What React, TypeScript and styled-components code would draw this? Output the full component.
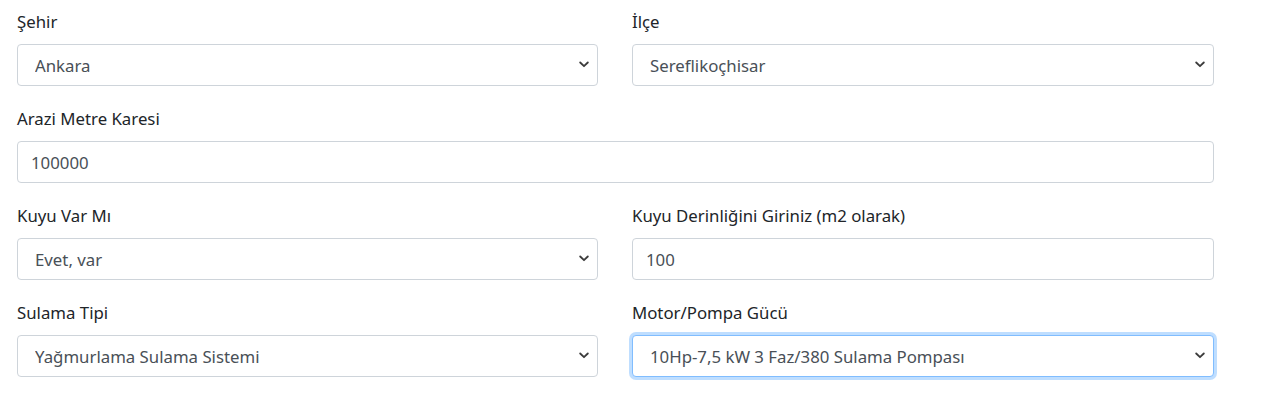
import React from 'react';
import styled, { createGlobalStyle } from 'styled-components';

const GlobalStyle = createGlobalStyle`
  body {
    margin: 0;
    background: #ffffff;
    font-family: "Noto Sans", "Open Sans", sans-serif;
    color: #212529;
  }
`;

const Form = styled.form`
  width: 1197px;
  margin-left: 17px;
  padding-top: 8px;
`;

const Row = styled.div`
  display: grid;
  grid-template-columns: 581px 582px;
  column-gap: 34px;
`;

const Group = styled.div<{ $full?: boolean }>`
  grid-column: ${(p) => (p.$full ? '1 / span 2' : 'auto')};
  margin-bottom: 19px;
`;

const Label = styled.label`
  display: block;
  font-size: 16.8px;
  line-height: 27px;
  margin-bottom: 9px;
  color: #212529;
`;

const Field = styled.input`
  display: block;
  box-sizing: border-box;
  width: 100%;
  height: 42px;
  padding: 0 13px;
  font: inherit;
  font-size: 16.8px;
  color: #495057;
  background: #fff;
  border: 1px solid #ced4da;
  border-radius: 4px;
  outline: none;
`;

const SelectWrap = styled.div`
  position: relative;
`;

const Select = styled.select<{ $focused?: boolean }>`
  display: block;
  box-sizing: border-box;
  width: 100%;
  height: 42px;
  padding: 0 36px 0 17px;
  font: inherit;
  font-size: 16.8px;
  color: #495057;
  background: #fff;
  appearance: none;
  border: 1px solid ${(p) => (p.$focused ? '#80bdff' : '#ced4da')};
  border-radius: 4px;
  box-shadow: ${(p) => (p.$focused ? '0 0 0 3px rgba(0, 123, 255, 0.25)' : 'none')};
  outline: none;
`;

const Chevron = styled.svg`
  position: absolute;
  right: 9px;
  top: 50%;
  width: 10px;
  height: 7px;
  margin-top: -4px;
  pointer-events: none;
`;

const Dropdown: React.FC<{ value: string; focused?: boolean }> = ({ value, focused }) => (
  <SelectWrap>
    <Select $focused={focused} defaultValue={value}>
      <option>{value}</option>
    </Select>
    <Chevron viewBox="0 0 10 7">
      <path d="M1.2 1.5 L5 5.2 L8.8 1.5" fill="none" stroke="#3c3c3c" strokeWidth="1.8" strokeLinecap="round" strokeLinejoin="round" />
    </Chevron>
  </SelectWrap>
);

export default function App() {
  return (
    <>
      <GlobalStyle />
      <Form onSubmit={(e) => e.preventDefault()}>
        <Row>
          <Group>
            <Label>Şehir</Label>
            <Dropdown value="Ankara" />
          </Group>
          <Group>
            <Label>İlçe</Label>
            <Dropdown value="Sereflikoçhisar" />
          </Group>
          <Group $full>
            <Label>Arazi Metre Karesi</Label>
            <Field defaultValue="100000" />
          </Group>
          <Group>
            <Label>Kuyu Var Mı</Label>
            <Dropdown value="Evet, var" />
          </Group>
          <Group>
            <Label>Kuyu Derinliğini Giriniz (m2 olarak)</Label>
            <Field defaultValue="100" />
          </Group>
          <Group>
            <Label>Sulama Tipi</Label>
            <Dropdown value="Yağmurlama Sulama Sistemi" />
          </Group>
          <Group>
            <Label>Motor/Pompa Gücü</Label>
            <Dropdown value="10Hp-7,5 kW 3 Faz/380 Sulama Pompası" focused />
          </Group>
        </Row>
      </Form>
    </>
  );
}
